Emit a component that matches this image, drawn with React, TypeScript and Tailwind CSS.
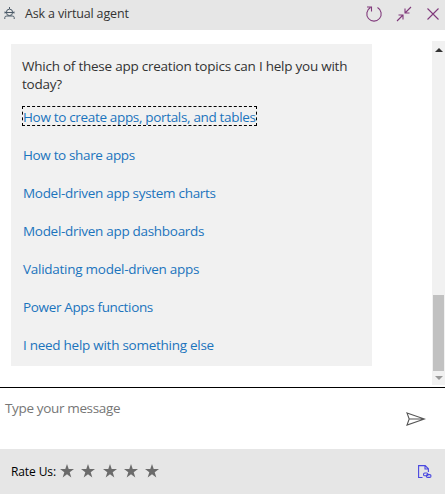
const topics = [
  { label: 'How to create apps, portals, and tables', tracking: 'tracking-[-0.33px]' },
  { label: 'How to share apps', tracking: 'tracking-[-0.35px]' },
  { label: 'Model-driven app system charts', tracking: 'tracking-[-0.3px]' },
  { label: 'Model-driven app dashboards', tracking: 'tracking-[-0.3px]' },
  { label: 'Validating model-driven apps', tracking: 'tracking-[-0.26px]' },
  { label: 'Power Apps functions', tracking: 'tracking-[-0.35px]' },
  { label: 'I need help with something else', tracking: 'tracking-[-0.27px]' },
];

function BotIcon() {
  return (
    <svg width="12" height="13" viewBox="0 0 12 13" fill="none" stroke="#4b5a68" strokeWidth="1">
      <path d="M5.500 0v2M1 4.500v2M10 4.500v2M1 5.500h9M.8 12v-1.500q0-1.500 2-1.500h5.400q2 0 2 1.500V12" />
      <rect x="2.500" y="2.200" width="6" height="6.300" rx="2.800" />
    </svg>
  );
}

function RefreshIcon() {
  return (
    <svg width="18" height="18" viewBox="0 0 18 18" fill="none" stroke="#80397b" strokeWidth="1.1">
      <path d="M12.500 2.600A7.200 7.200 0 1 1 5.500 2.600M2 2h4.500v4.500" />
    </svg>
  );
}

function CollapseIcon() {
  return (
    <svg width="16" height="16" viewBox="0 0 16 16" fill="none" stroke="#80397b" strokeWidth="1.1">
      <path d="M15 1 9 7M9 2.500V7h4.500M1 15l6-6M2.500 9H7v4.500" />
    </svg>
  );
}

function CloseIcon() {
  return (
    <svg width="12" height="12" viewBox="0 0 12 12" fill="none" stroke="#80397b" strokeWidth="1.1">
      <path d="m.5.5 11 11M11.500.5l-11 11" />
    </svg>
  );
}

function SendIcon() {
  return (
    <svg width="20" height="14" viewBox="0 0 20 14" fill="none" stroke="#555" strokeWidth="1.1">
      <path d="M1 1 18.500 7 1 13 3.200 7ZM3.200 7H18" />
    </svg>
  );
}

function DocumentLinkIcon() {
  return (
    <svg width="14" height="14" viewBox="0 0 14 14" fill="none" stroke="#4a48e0" strokeWidth="1.1">
      <path d="M4.500 12.500H.6V.6h6.600l3.200 3.200V7M7 .6V4h3.400" />
      <rect x="5.500" y="8" width="4.500" height="2.800" rx="1.400" />
      <rect x="8.300" y="9.600" width="4.700" height="2.800" rx="1.400" />
    </svg>
  );
}

function Star() {
  return (
    <svg width="14" height="14" viewBox="0 0 14 14" fill="#6b6b6b">
      <path d="m7 0 1.700 5H14L9.700 8.200 11.300 13.400 7 10.200 2.700 13.400 4.300 8.200 0 5h5.300Z" />
    </svg>
  );
}

export default function App() {
  return (
    <div className="h-[497px] w-[446px] overflow-hidden bg-white font-['Open_Sans','Noto_Sans',sans-serif]">
      <div className="flex h-[494px] w-[445px] flex-col">
        <header className="flex h-[30px] shrink-0 items-center bg-[#e6e6e6] pb-[2px]">
          <div className="ml-1 w-[21px] pb-px"><BotIcon /></div>
          <h1 className="pt-px text-[12.500px] tracking-[-0.16px] text-[#333]">Ask a virtual agent</h1>
          <div className="ml-auto flex items-center">
            <RefreshIcon />
            <div className="ml-[13px]"><CollapseIcon /></div>
            <div className="ml-[15px] mr-[6px]"><CloseIcon /></div>
          </div>
        </header>
        <main className="flex h-[357px] shrink-0 justify-between">
          <section className="ml-[11px] mt-[14px] h-[322px] w-[361px] bg-[#f1f1f1] pl-[11px] pt-[13px] text-[13.500px] leading-[18px]">
            <p className="whitespace-nowrap tracking-[-0.24px] text-[#333]">
              Which of these app creation topics can I help you with
              <br />
              today?
            </p>
            <ul className="mt-[13px] flex flex-col gap-[18px]">
              {topics.map((topic, index) => (
                <li key={topic.label} className="flex h-5">
                  <a
                    className={`whitespace-nowrap border border-dashed leading-5 text-[#1b74bd] ${topic.tracking} ${index === 0 ? 'border-black' : 'border-transparent'}`}
                  >
                    {topic.label}
                  </a>
                </li>
              ))}
            </ul>
          </section>
          <div className="mt-[11px] flex h-[344px] w-[13px] flex-col items-center bg-[#f1f1f1]">
            <svg className="mt-[7px] shrink-0" width="8" height="4" viewBox="0 0 8 4"><path d="M4 0 8 4H0Z" fill="#333" /></svg>
            <div className="mt-[243px] h-[76px] w-[11px] shrink-0 bg-[#c1c1c1]" />
            <svg className="mt-[5px] shrink-0" width="8" height="4" viewBox="0 0 8 4"><path d="M0 0h8L4 4Z" fill="#999" /></svg>
          </div>
        </main>
        <div className="flex h-[62px] shrink-0 justify-between border-t border-black">
          <span className="ml-[5px] mt-[11px] text-[13.500px] leading-[18px] tracking-[-0.35px] text-[#767676]">Type your message</span>
          <div className="mr-[19px] mt-[24px]"><SendIcon /></div>
        </div>
        <footer className="flex h-[45px] shrink-0 items-center bg-[#e6e6e6] pl-[11px]">
          <span className="w-[49px] whitespace-nowrap text-[12px] tracking-[-0.1px] text-black">Rate Us:</span>
          <div className="flex gap-[7.300px] pb-px">
            {[1, 2, 3, 4, 5].map((rating) => <Star key={rating} />)}
          </div>
          <div className="ml-auto mr-[13px]"><DocumentLinkIcon /></div>
        </footer>
      </div>
    </div>
  );
}
